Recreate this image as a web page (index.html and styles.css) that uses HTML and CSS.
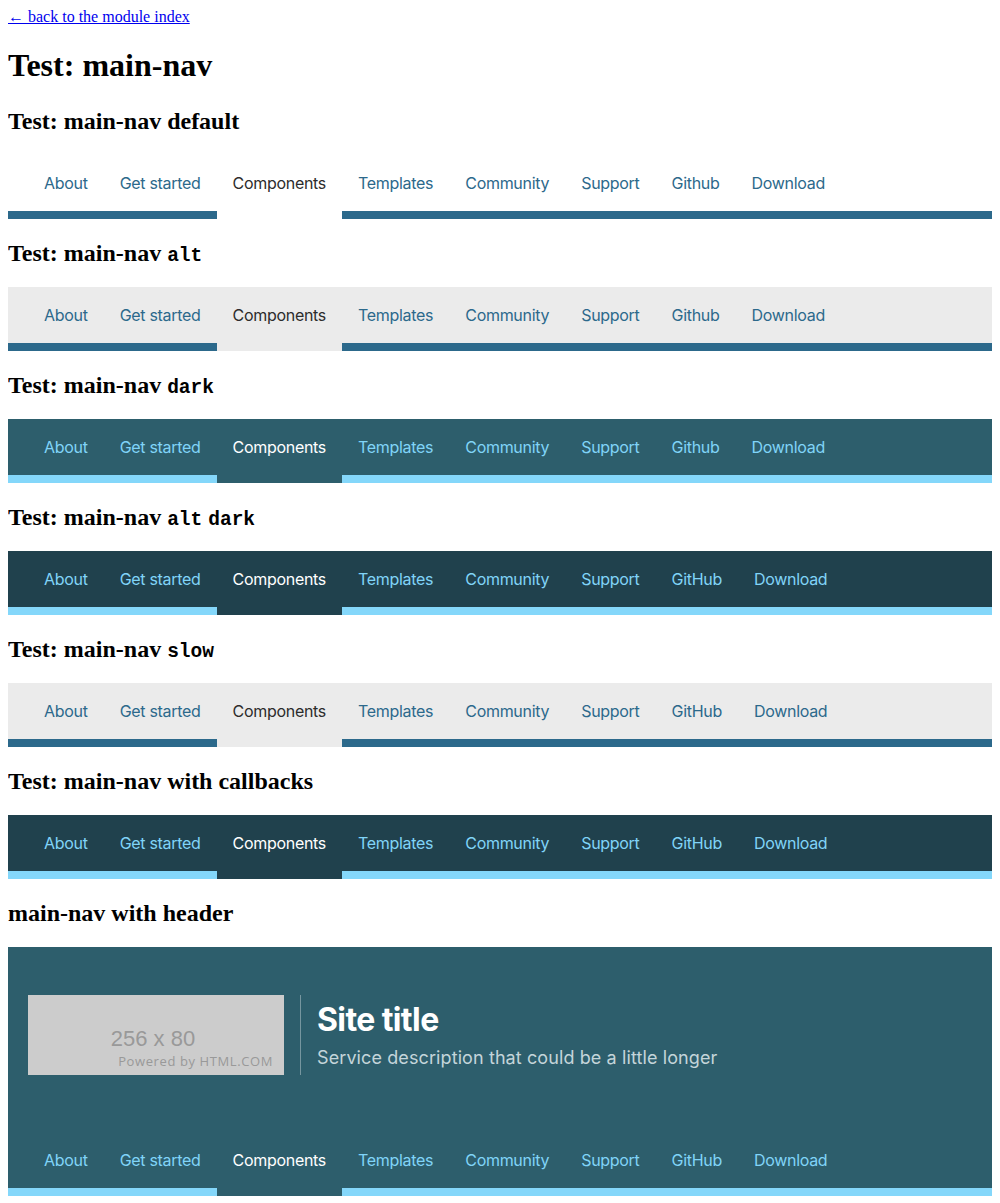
FILE: index.html
```html
<!DOCTYPE html>
<html>
<head>
<meta charset="utf-8">
<link rel="stylesheet" href="styles.css">
</head>
<body>
<a class="back" href="#">← back to the module index</a>
<h1>Test: main-nav</h1>

<h2>Test: main-nav default</h2>
<nav class="nav nav-default">
  <a href="#">About</a><a href="#">Get started</a><a class="active" href="#">Components</a><a href="#">Templates</a><a href="#">Community</a><a href="#">Support</a><a href="#">Github</a><a href="#">Download</a>
</nav>

<h2>Test: main-nav <code>alt</code></h2>
<nav class="nav nav-alt">
  <a href="#">About</a><a href="#">Get started</a><a class="active" href="#">Components</a><a href="#">Templates</a><a href="#">Community</a><a href="#">Support</a><a href="#">Github</a><a href="#">Download</a>
</nav>

<h2>Test: main-nav <code>dark</code></h2>
<nav class="nav nav-dark">
  <a href="#">About</a><a href="#">Get started</a><a class="active" href="#">Components</a><a href="#">Templates</a><a href="#">Community</a><a href="#">Support</a><a href="#">Github</a><a href="#">Download</a>
</nav>

<h2>Test: main-nav <code>alt</code> <code>dark</code></h2>
<nav class="nav nav-altdark">
  <a href="#">About</a><a href="#">Get started</a><a class="active" href="#">Components</a><a href="#">Templates</a><a href="#">Community</a><a href="#">Support</a><a href="#">GitHub</a><a href="#">Download</a>
</nav>

<h2>Test: main-nav <code>slow</code></h2>
<nav class="nav nav-alt">
  <a href="#">About</a><a href="#">Get started</a><a class="active" href="#">Components</a><a href="#">Templates</a><a href="#">Community</a><a href="#">Support</a><a href="#">GitHub</a><a href="#">Download</a>
</nav>

<h2>Test: main-nav with callbacks</h2>
<nav class="nav nav-altdark">
  <a href="#">About</a><a href="#">Get started</a><a class="active" href="#">Components</a><a href="#">Templates</a><a href="#">Community</a><a href="#">Support</a><a href="#">GitHub</a><a href="#">Download</a>
</nav>

<h2>main-nav with header</h2>
<header class="site-header">
  <div class="brand">
    <div class="logo">
      <span class="logo-size">256 x 80</span>
      <span class="logo-powered">Powered by HTML.COM</span>
    </div>
    <div class="brand-text">
      <div class="site-title">Site title</div>
      <div class="site-desc">Service description that could be a little longer</div>
    </div>
  </div>
  <nav class="nav nav-dark">
    <a href="#">About</a><a href="#">Get started</a><a class="active" href="#">Components</a><a href="#">Templates</a><a href="#">Community</a><a href="#">Support</a><a href="#">GitHub</a><a href="#">Download</a>
  </nav>
</header>
</body>
</html>
```

FILE: styles.css
```css
body {
  margin: 8px;
  font-family: "Liberation Serif", "Times New Roman", serif;
  font-size: 16px;
}

.back {
  color: #0000ee;
}

h1 {
  font-size: 32px;
  margin: 21px 0 23px;
}

h2 {
  font-size: 24px;
  line-height: 28px;
  height: 28px;
  margin: 20px 0;
}

h2 code {
  font-family: "Liberation Mono", monospace;
  font-size: 0.8125em;
  line-height: 1;
}

.nav {
  display: flex;
  padding: 0 20px;
  height: 64px;
  align-items: flex-start;
  font-family: Inter, "Noto Sans", sans-serif;
  font-size: 16px;
  letter-spacing: -0.3px;
}

.nav a {
  display: block;
  padding: 0 16px;
  height: 56px;
  line-height: 56px;
  text-decoration: none;
  white-space: nowrap;
}

.nav a.active {
  height: 64px;
}

.nav-default {
  background: #ffffff;
  box-shadow: inset 0 -8px 0 #2c698b;
}
.nav-default a { color: #2c698b; }
.nav-default a.active { color: #2c2c2c; background: #ffffff; }

.nav-alt {
  background: #ebebeb;
  box-shadow: inset 0 -8px 0 #2c698b;
}
.nav-alt a { color: #2c698b; }
.nav-alt a.active { color: #2c2c2c; background: #ebebeb; }

.nav-dark {
  background: #2d5e6c;
  box-shadow: inset 0 -8px 0 #84d7fa;
}
.nav-dark a { color: #80d4f8; }
.nav-dark a.active { color: #ffffff; background: #2d5e6c; }

.nav-altdark {
  background: #20414d;
  box-shadow: inset 0 -8px 0 #84d7fa;
}
.nav-altdark a { color: #80d4f8; }
.nav-altdark a.active { color: #ffffff; background: #20414d; }

.site-header {
  background: #2d5e6c;
}

.brand {
  display: flex;
  align-items: stretch;
  padding: 48px 20px 57px;
}

.logo {
  width: 256px;
  height: 80px;
  background: #cccccc;
  display: flex;
  flex-direction: column;
  align-items: center;
  justify-content: flex-end;
  font-family: "Liberation Sans", Arial, sans-serif;
  color: #999999;
  padding-bottom: 6px;
  box-sizing: border-box;
}

.logo-size {
  font-size: 22px;
  line-height: 28px;
  margin-right: 6px;
}

.logo-powered {
  align-self: flex-end;
  margin-right: 11px;
  font-family: "Open Sans", sans-serif;
  font-size: 13px;
  letter-spacing: 0.6px;
  line-height: 16px;
}

.brand-text {
  margin-left: 16px;
  padding-left: 16px;
  padding-top: 2px;
  border-left: 1px solid rgba(255, 255, 255, 0.35);
  display: flex;
  flex-direction: column;
  justify-content: center;
  font-family: Inter, "Noto Sans", sans-serif;
}

.site-title {
  color: #ffffff;
  font-size: 32px;
  font-weight: 700;
  line-height: 40px;
  letter-spacing: -0.6px;
}

.site-desc {
  color: #c4d5da;
  font-size: 18px;
  line-height: 28px;
  margin-top: 4px;
  letter-spacing: 0.1px;
}
```
